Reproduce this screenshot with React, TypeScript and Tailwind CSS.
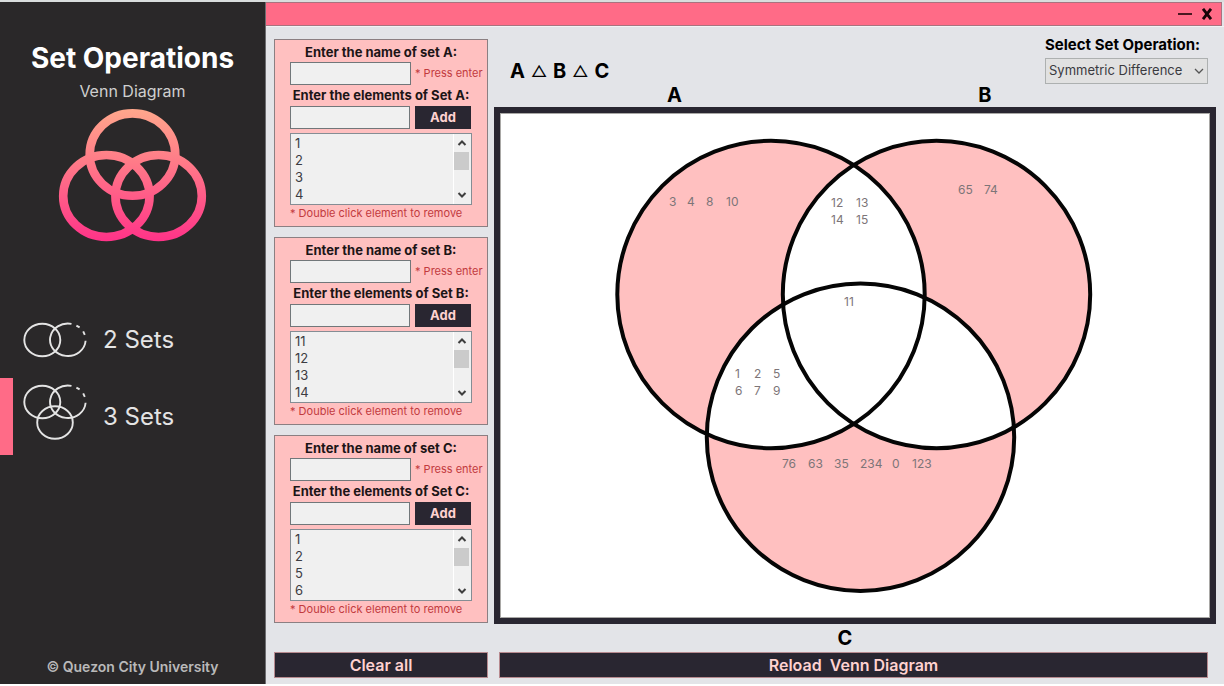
import { useState } from "react";

type SetName = "A" | "B" | "C";

const INITIAL: Record<SetName, number[]> = {
  A: [1, 2, 3, 4, 5, 6, 7, 8, 9, 10, 11, 12, 13, 14, 15],
  B: [11, 12, 13, 14, 15, 65, 74],
  C: [1, 2, 5, 6, 7, 9, 11, 76, 63, 35, 234, 0, 123],
};

const VISIBLE_ROWS = 4;

function Logo() {
  return (
    <svg viewBox="58 108 149 135" className="h-[135px] w-[149px]" aria-hidden="true">
      <defs>
        <linearGradient id="logo" gradientUnits="userSpaceOnUse" x1="0" y1="109" x2="0" y2="241">
          <stop offset="0" stopColor="#ffa78c" />
          <stop offset="0.4" stopColor="#ff7b88" />
          <stop offset="1" stopColor="#ff3388" />
        </linearGradient>
      </defs>
      <g fill="none" stroke="url(#logo)" strokeWidth="8.6">
        <ellipse cx="132.5" cy="154.6" rx="42.8" ry="41.2" />
        <ellipse cx="106.4" cy="196" rx="43.2" ry="41" />
        <ellipse cx="158.6" cy="196" rx="43.2" ry="41" />
      </g>
    </svg>
  );
}

function PairShapes() {
  return (
    <>
      <ellipse cx="19.3" cy="18" rx="18" ry="16.2" />
      <path d="M48.5 1.9A17.8 16.2 0 1 0 62.6 18.8" />
      <path d="M53.4 3.6l3.2 1.8M60.2 9.4l1.6 3.4" />
    </>
  );
}

function TwoSetsIcon() {
  return (
    <svg viewBox="0 0 64 36" className="h-9 w-16" fill="none" stroke="#e4e4e4" strokeWidth="1.9" aria-hidden="true">
      <PairShapes />
    </svg>
  );
}

function ThreeSetsIcon() {
  return (
    <svg viewBox="0 0 64 66" className="h-[66px] w-16" fill="none" stroke="#e4e4e4" strokeWidth="1.9" aria-hidden="true">
      <PairShapes />
      <ellipse cx="32" cy="38.5" rx="17.8" ry="16.2" />
    </svg>
  );
}

function Chevron({ up = false }: { up?: boolean }) {
  return (
    <svg viewBox="0 0 10 8" className="h-2 w-2.5" fill="none" stroke="#3f3f3f" strokeWidth="2" aria-hidden="true">
      <path d={up ? "M1.5 6L5 2.5L8.5 6" : "M1.5 2L5 5.5L8.5 2"} />
    </svg>
  );
}

function SetPanel({ name }: { name: SetName }) {
  const [items, setItems] = useState(INITIAL[name]);
  const [offset, setOffset] = useState(0);
  const [draft, setDraft] = useState("");
  const maxOffset = Math.max(0, items.length - VISIBLE_ROWS);

  const add = () => {
    const value = Number(draft);
    if (draft.trim() !== "" && !Number.isNaN(value) && !items.includes(value)) {
      setItems([...items, value]);
    }
    setDraft("");
  };

  return (
    <section className="h-[188px] border border-[#8b7f82] bg-[#ffc0c0] px-[15px] pt-[3px] text-[13px]">
      <label htmlFor={`name-${name}`} className="block h-[19px] text-center leading-[18px] font-bold text-[#1c1517]">
        Enter the name of set {name}:
      </label>
      <div className="flex items-center">
        <input
          id={`name-${name}`}
          className="h-[23px] w-[121px] shrink-0 border border-[#71777a] bg-[#f0f0f0] px-1 outline-none"
        />
        <span className="ml-1 text-[11px] whitespace-nowrap text-[#c23a3e]">* Press enter</span>
      </div>
      <label htmlFor={`element-${name}`} className="block h-[21px] text-center leading-[20px] font-bold whitespace-nowrap text-[#1c1517]">
        Enter the elements of Set {name}:
      </label>
      <div className="flex items-center gap-[5px]">
        <input
          id={`element-${name}`}
          value={draft}
          onChange={(e) => setDraft(e.target.value)}
          className="h-[23px] w-[120px] border border-[#71777a] bg-[#f0f0f0] px-1 outline-none"
        />
        <button type="button" onClick={add} className="h-[23px] w-14 bg-[#292631] font-bold text-[#ffd2d0]">
          Add
        </button>
      </div>
      <div className="mt-1 flex h-[72px] w-[182px] border border-[#858d94] bg-[#f0f0f0]">
        <ul className="flex-1 pt-px pl-1 leading-[17px] text-[#3c3c42]" aria-label={`Elements of set ${name}`}>
          {items.slice(offset, offset + VISIBLE_ROWS).map((item) => (
            <li key={item} onDoubleClick={() => setItems(items.filter((i) => i !== item))}>
              {item}
            </li>
          ))}
        </ul>
        <div className="mr-0.5 flex w-4 flex-col border-l border-white">
          <button
            type="button"
            aria-label="Scroll up"
            className="flex h-[18px] items-center justify-center"
            onClick={() => setOffset(Math.max(0, offset - 1))}
          >
            <Chevron up />
          </button>
          <div className="h-[18px] bg-[#cbcbcb]" />
          <button
            type="button"
            aria-label="Scroll down"
            className="mt-auto flex h-[18px] items-center justify-center"
            onClick={() => setOffset(Math.min(maxOffset, offset + 1))}
          >
            <Chevron />
          </button>
        </div>
      </div>
      <p className="text-[11px] leading-[17px] whitespace-nowrap text-[#c23a3e]">* Double click element to remove</p>
    </section>
  );
}

const LABELS: { x: number; y: number; text: string }[] = [
  { x: 168, y: 91, text: "3" },
  { x: 186, y: 91, text: "4" },
  { x: 205, y: 91, text: "8" },
  { x: 225, y: 91, text: "10" },
  { x: 330, y: 92, text: "12" },
  { x: 355, y: 92, text: "13" },
  { x: 330, y: 109, text: "14" },
  { x: 355, y: 109, text: "15" },
  { x: 457, y: 79, text: "65" },
  { x: 483, y: 79, text: "74" },
  { x: 343, y: 191, text: "11" },
  { x: 234, y: 263, text: "1" },
  { x: 253, y: 263, text: "2" },
  { x: 272, y: 263, text: "5" },
  { x: 234, y: 280, text: "6" },
  { x: 253, y: 280, text: "7" },
  { x: 272, y: 280, text: "9" },
  { x: 281, y: 353, text: "76" },
  { x: 307, y: 353, text: "63" },
  { x: 333, y: 353, text: "35" },
  { x: 359, y: 353, text: "234" },
  { x: 391, y: 353, text: "0" },
  { x: 411, y: 353, text: "123" },
];

function VennDiagram() {
  const a = { cx: 270, cy: 180, r: 153.7 };
  const b = { cx: 435.5, cy: 180, r: 153.7 };
  const c = { cx: 359.5, cy: 322.7, r: 153.7 };
  return (
    <svg viewBox="0 0 708 502" className="h-full w-full" role="img" aria-label="Symmetric difference of A, B and C">
      <defs>
        <clipPath id="inA"><circle {...a} /></clipPath>
        <clipPath id="inB"><circle {...b} /></clipPath>
      </defs>
      <g fill="#ffc0c0">
        <circle {...a} />
        <circle {...b} />
        <circle {...c} />
      </g>
      <g fill="#ffffff">
        <circle {...b} clipPath="url(#inA)" />
        <circle {...c} clipPath="url(#inA)" />
        <circle {...c} clipPath="url(#inB)" />
      </g>
      <g fill="none" stroke="#050505" strokeWidth="4">
        <circle {...a} />
        <circle {...b} />
        <circle {...c} />
      </g>
      <g fill="#7d7578" fontSize="12">
        {LABELS.map((l) => (
          <text key={`${l.x}-${l.y}`} x={l.x} y={l.y}>{l.text}</text>
        ))}
      </g>
    </svg>
  );
}

export default function App() {
  return (
    <div className="flex min-h-screen border-t-2 border-b-2 border-t-[#d9dddd] border-b-white bg-[#e3e4e8] font-['Inter',sans-serif] text-black">
      <aside className="flex w-[266px] shrink-0 flex-col border-r border-[#6d6d70] bg-[#2a2829]">
        <h1 className="mt-[39px] text-center text-[28px] leading-[34px] font-bold text-white">Set Operations</h1>
        <p className="mt-1 text-center text-base leading-6 text-[#cfcfcf]">Venn Diagram</p>
        <div className="mt-[5px] flex justify-center">
          <Logo />
        </div>
        <nav className="mt-[58px] flex flex-col text-2xl text-[#e4e4e4]">
          <button type="button" className="flex h-[77px] items-center gap-4 border-l-[13px] border-transparent pl-2.5">
            <TwoSetsIcon />
            <span>2 Sets</span>
          </button>
          <button type="button" className="flex h-[77px] items-center gap-4 border-l-[13px] border-[#ff6b87] pl-2.5">
            <ThreeSetsIcon />
            <span>3 Sets</span>
          </button>
        </nav>
        <footer className="mt-auto pb-[7px] text-center text-sm leading-5 font-semibold text-[#b9b9b9]">© Quezon City University</footer>
      </aside>

      <div className="flex min-w-0 flex-1 flex-col">
        <header className="mr-0.5 flex h-6 items-center justify-end gap-2 border border-l-0 border-[#a8737f] bg-[#ff6b87] pr-2">
          <button type="button" aria-label="Minimize" className="flex h-4 w-4 items-center justify-center">
            <span className="h-0.5 w-3.5 bg-[#4a1820]" />
          </button>
          <button type="button" aria-label="Close" className="flex h-4 w-3 items-center justify-center">
            <svg viewBox="0 0 12 12" className="h-3 w-3" stroke="#160407" strokeWidth="2.8" aria-hidden="true">
              <path d="M2 0.8L10 11.2M10 0.8L2 11.2" />
            </svg>
          </button>
        </header>

        <main className="flex flex-1 gap-1.5 border-t border-[#f2f3f5] pr-2 pb-1.5 pl-2">
          <div className="flex w-[214px] shrink-0 flex-col gap-2.5 pt-3">
            <SetPanel name="A" />
            <SetPanel name="B" />
            <SetPanel name="C" />
            <button type="button" className="mt-auto h-[26px] border border-[#b78a8f] bg-[#292631] text-base leading-6 font-semibold text-[#ffd2d0]">
              Clear all
            </button>
          </div>

          <div className="flex min-w-0 flex-1 flex-col">
            <div className="flex items-start justify-between pt-[9px] pr-2 pl-4">
              <p className="flex items-center gap-1.5 pt-[25px] text-xl leading-5 font-bold">
                <span>A</span>
                <span className="text-base leading-5 font-normal">△</span>
                <span>B</span>
                <span className="text-base leading-5 font-normal">△</span>
                <span>C</span>
              </p>
              <div className="flex flex-col gap-1">
                <label htmlFor="operation" className="text-[15px] leading-[18px] font-bold whitespace-nowrap">
                  Select Set Operation:
                </label>
                <div className="grid items-center">
                  <select
                    id="operation"
                    defaultValue="Symmetric Difference"
                    className="col-start-1 row-start-1 h-[26px] w-[163px] appearance-none border border-[#adb0b0] bg-[#e1e1e1] pl-[3px] text-[13px] text-[#3a3a3f]"
                  >
                    <option>Symmetric Difference</option>
                  </select>
                  <svg
                    viewBox="0 0 10 8"
                    className="pointer-events-none col-start-1 row-start-1 mr-1 h-2 w-2.5 justify-self-end"
                    fill="none"
                    stroke="#555555"
                    strokeWidth="1.3"
                    aria-hidden="true"
                  >
                    <path d="M1 2L5 6L9 2" />
                  </svg>
                </div>
              </div>
            </div>
            <div className="grid h-[23px] grid-cols-[50fr_36fr_14fr] text-center text-xl leading-[22px] font-bold">
              <span>A</span>
              <span>B</span>
            </div>
            <div className="flex min-h-0 flex-1 border-[6px] border-[#292631] bg-white">
              <div className="min-w-0 flex-1 border border-[#a9a8a6]">
                <VennDiagram />
              </div>
            </div>
            <p className="h-7 pr-5 text-center text-xl leading-7 font-bold">C</p>
            <button type="button" className="mr-2 ml-[5px] h-[26px] border border-[#b78a8f] bg-[#292631] text-base leading-6 font-semibold whitespace-pre text-[#ffd2d0]">
              Reload  Venn Diagram
            </button>
          </div>
        </main>
      </div>
    </div>
  );
}
